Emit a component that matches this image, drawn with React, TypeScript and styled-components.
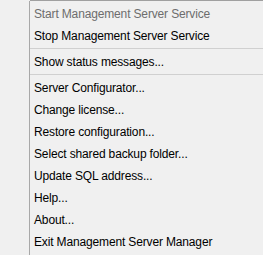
import React from 'react'
import styled, { createGlobalStyle } from 'styled-components'

const GlobalStyle = createGlobalStyle`
  html, body {
    margin: 0;
    padding: 0;
    background: #f0f0f0;
  }
`

const Menu = styled.div`
  display: flex;
  width: 263px;
  height: 255px;
  background: #f0f0f0;
  font-family: 'Liberation Sans', Arial, sans-serif;
  font-size: 12px;
  letter-spacing: -0.15px;
  overflow: hidden;
`

const Gutter = styled.div`
  width: 30px;
  flex-shrink: 0;
  padding-top: 1px;
  display: flex;
`

const GutterLine = styled.div`
  margin-left: auto;
  width: 1px;
  background: #a8a8a8;
`

const ItemList = styled.div`
  flex: 1;
  display: flex;
  flex-direction: column;
  border-top: 1px solid #a0a0a0;
  padding-top: 2px;
`

const Item = styled.div<{ disabled?: boolean }>`
  height: 22px;
  display: flex;
  align-items: center;
  padding-left: 4px;
  color: ${({ disabled }) => (disabled ? '#6d6d6d' : '#000')};
  white-space: nowrap;
`

const Separator = styled.div`
  height: 4px;
  display: flex;
  flex-direction: column;
  padding-top: 1px;
  box-sizing: border-box;
  &::before {
    content: '';
    height: 1px;
    background: #d0d0d0;
  }
`

type Entry = { label: string; disabled?: boolean } | 'sep'

const entries: Entry[] = [
  { label: 'Start Management Server Service', disabled: true },
  { label: 'Stop Management Server Service' },
  'sep',
  { label: 'Show status messages...' },
  'sep',
  { label: 'Server Configurator...' },
  { label: 'Change license...' },
  { label: 'Restore configuration...' },
  { label: 'Select shared backup folder...' },
  { label: 'Update SQL address...' },
  { label: 'Help...' },
  { label: 'About...' },
  { label: 'Exit Management Server Manager' },
]

export default function App() {
  return (
    <>
      <GlobalStyle />
      <Menu>
        <Gutter>
          <GutterLine />
        </Gutter>
        <ItemList>
          {entries.map((entry, i) =>
            entry === 'sep' ? (
              <Separator key={i} />
            ) : (
              <Item key={entry.label} disabled={entry.disabled}>
                {entry.label}
              </Item>
            )
          )}
        </ItemList>
      </Menu>
    </>
  )
}
